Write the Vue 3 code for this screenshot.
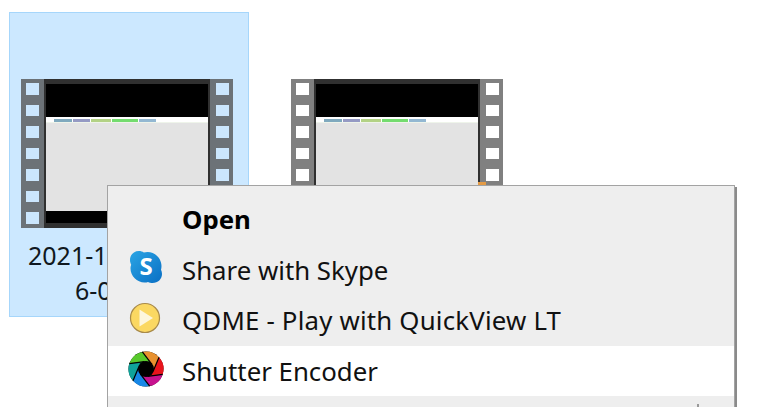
<script setup>
const thumbs = [
  { id: 1, selected: true, lines: ['2021-1', '6-0'] },
  { id: 2, selected: false, lines: [] },
]
const holes = [1, 2, 3, 4, 5, 6, 7]
const tabs = [
  { w: 18, c: '#7fa9be' },
  { w: 17, c: '#959ac4' },
  { w: 20, c: '#b3d285' },
  { w: 26, c: '#74dc6f' },
  { w: 17, c: '#93b8d2' },
]
const cx = 18, cy = 18, R = 17.5, r = 7.5
const pt = (rad, deg) => {
  const a = (deg * Math.PI) / 180
  return `${(cx + rad * Math.cos(a)).toFixed(2)} ${(cy + rad * Math.sin(a)).toFixed(2)}`
}
const bladeColors = ['#e8912f', '#e8141c', '#c7128f', '#1787e6', '#0fa39a', '#58c92c']
const blades = bladeColors.map((c, i) => {
  const s = -90 + i * 60 - 12
  const e = s + 60
  return {
    c,
    d: `M${pt(r, s + 60)} L${pt(R, s)} A${R} ${R} 0 0 1 ${pt(R, e)} L${pt(r, e + 60)} Z`,
    line: `M${pt(r, s + 60)} L${pt(R, s)}`,
  }
})
</script>

<template>
  <main class="page">
    <section class="files">
      <article v-for="t in thumbs" :key="t.id" class="file" :class="{ selected: t.selected }">
        <div class="film">
          <div class="strip">
            <span v-for="h in holes" :key="h" class="hole"></span>
          </div>
          <div class="frame">
            <div class="black-top"></div>
            <div class="tabs">
              <span v-for="(tab, i) in tabs" :key="i" class="tab" :style="{ width: tab.w + 'px', background: tab.c }"></span>
            </div>
            <div class="content"></div>
            <div class="black-bottom"></div>
          </div>
          <div class="strip right">
            <span v-for="h in holes" :key="h" class="hole"></span>
          </div>
        </div>
        <p v-for="(l, i) in t.lines" :key="l" class="name" :class="'line' + i">{{ l }}</p>
      </article>
    </section>

    <span class="orange"></span>

    <nav class="menu">
      <div class="item strong">
        <span class="ico"></span>
        <span>Open</span>
      </div>
      <div class="item">
        <span class="ico">
          <svg width="36" height="36" viewBox="0 1 36 36">
            <defs>
              <linearGradient id="sky" x1="0" y1="0" x2="1" y2="1">
                <stop offset="0" stop-color="#2aa5e4" />
                <stop offset="1" stop-color="#0a6fc4" />
              </linearGradient>
            </defs>
            <path d="M11 2C5.5 2 2 6 2 11c0 2 .6 3.400 1.200 4.800C2.700 17 2.500 18 2.500 19.500 2.500 27 9 33.500 16.500 33.500c1.400 0 2.500-.2 3.500-.6 1.300.8 3 1.100 4.500 1.100C30 34 34 30 34 25c0-1.600-.4-3-1-4.300.3-1.200.5-2.300.5-3.700C33.500 9.500 27 3 19.500 3c-1.300 0-2.500.2-3.700.5C14.400 2.500 12.800 2 11 2Z" fill="url(#sky)" />
            <text x="18" y="26" text-anchor="middle" class="skype-s">S</text>
          </svg>
        </span>
        <span>Share with Skype</span>
      </div>
      <div class="item">
        <span class="ico">
          <svg width="36" height="36" viewBox="0 0 36 36">
            <circle cx="17" cy="17" r="14.500" fill="#fbd862" stroke="#a88a4a" stroke-width="1.200" />
            <path d="M11.500 8.500 L25 17 L11.500 25.500 Z" fill="#fdf6dc" />
          </svg>
        </span>
        <span class="wide">QDME - Play with QuickView LT</span>
      </div>
      <div class="item active">
        <span class="ico">
          <svg width="36" height="36" viewBox="0 0 36 36">
            <circle cx="18" cy="18" r="17.500" fill="#000" />
            <path v-for="b in blades" :key="b.c" :d="b.d" :fill="b.c" />
            <path v-for="b in blades" :key="b.c + 'l'" :d="b.line" stroke="#000" stroke-width="1.200" fill="none" />
            <circle cx="18" cy="18" r="8" fill="#000" />
          </svg>
        </span>
        <span>Shutter Encoder</span>
      </div>
      <span class="tick"></span>
    </nav>
  </main>
</template>

<style>
html, body { margin: 0; background: #fff; }
</style>

<style scoped>
.page {
  position: relative;
  width: 768px;
  height: 407px;
  overflow: hidden;
  background: #fff;
  font-family: "Noto Sans", "Open Sans", sans-serif;
  color: #111;
}
.files {
  display: flex;
  gap: 30px;
  padding: 12px 0 0 9px;
}
.file {
  box-sizing: border-box;
  width: 240px;
  height: 305px;
  padding: 66px 0 0 12px;
  border: 1px solid transparent;
}
.file.selected {
  background: #cce8ff;
  border-color: #a6d6fb;
}
.film {
  display: flex;
  width: 212px;
  height: 149px;
  margin-left: -1px;
}
.strip {
  box-sizing: border-box;
  flex: none;
  width: 23px;
  height: 149px;
  background: #808080;
  padding: 4px 0 0 5px;
  display: flex;
  flex-direction: column;
  gap: 10px;
}
.strip.right { padding-left: 6px; }
.selected .strip { background: #6c7277; }
.hole {
  display: block;
  width: 13px;
  height: 11.500px;
  background: #fff;
}
.selected .hole { background: #cbe6fd; }
.frame {
  box-sizing: border-box;
  flex: 1;
  display: flex;
  flex-direction: column;
  border: solid #303030;
  border-width: 5px 2px;
  background: #e3e3e3;
}
.black-top { height: 33px; background: #000; flex: none; }
.tabs {
  flex: none;
  height: 6px;
  background: #fff;
  display: flex;
  gap: 1px;
  padding: 2px 0 0 8px;
  box-sizing: border-box;
  border-bottom: 1px solid #eef4ea;
}
.tab { height: 3px; display: block; filter: blur(0.4px); }
.content { flex: 1; }
.black-bottom { flex: none; height: 12px; background: #000; }
.file:not(.selected) .black-bottom { display: none; }
.name {
  margin: 0;
  font-size: 25px;
  line-height: 35px;
  color: #101820;
  white-space: nowrap;
}
.line0 { margin-top: 10px; padding-left: 6px; }
.line1 { padding-left: 53px; }
.orange {
  position: absolute;
  left: 478px;
  top: 182px;
  width: 8px;
  height: 3px;
  background: #e39a45;
}
.menu {
  position: absolute;
  left: 107px;
  top: 185px;
  width: 628px;
  height: 240px;
  box-sizing: border-box;
  padding-top: 8px;
  background: #eeeeee;
  border: 1px solid #a3a3a3;
  box-shadow: 2px 2px 0 #8a8a8a;
}
.item {
  display: flex;
  align-items: center;
  height: 50.500px;
  font-size: 25.800px;
  color: #111;
}
.item.strong { font-weight: 700; color: #000; }
.item.active { background: #fff; }
.wide { letter-spacing: 0.2px; }
.ico {
  width: 36px;
  height: 36px;
  margin: 0 18px 3px 20px;
  flex: none;
  display: block;
}
.ico svg { display: block; }
.skype-s {
  font-family: "Noto Sans", sans-serif;
  font-size: 24px;
  font-weight: 700;
  fill: #fff;
}
.tick {
  position: absolute;
  left: 589px;
  top: 218px;
  width: 2px;
  height: 4px;
  background: #999;
}
</style>
